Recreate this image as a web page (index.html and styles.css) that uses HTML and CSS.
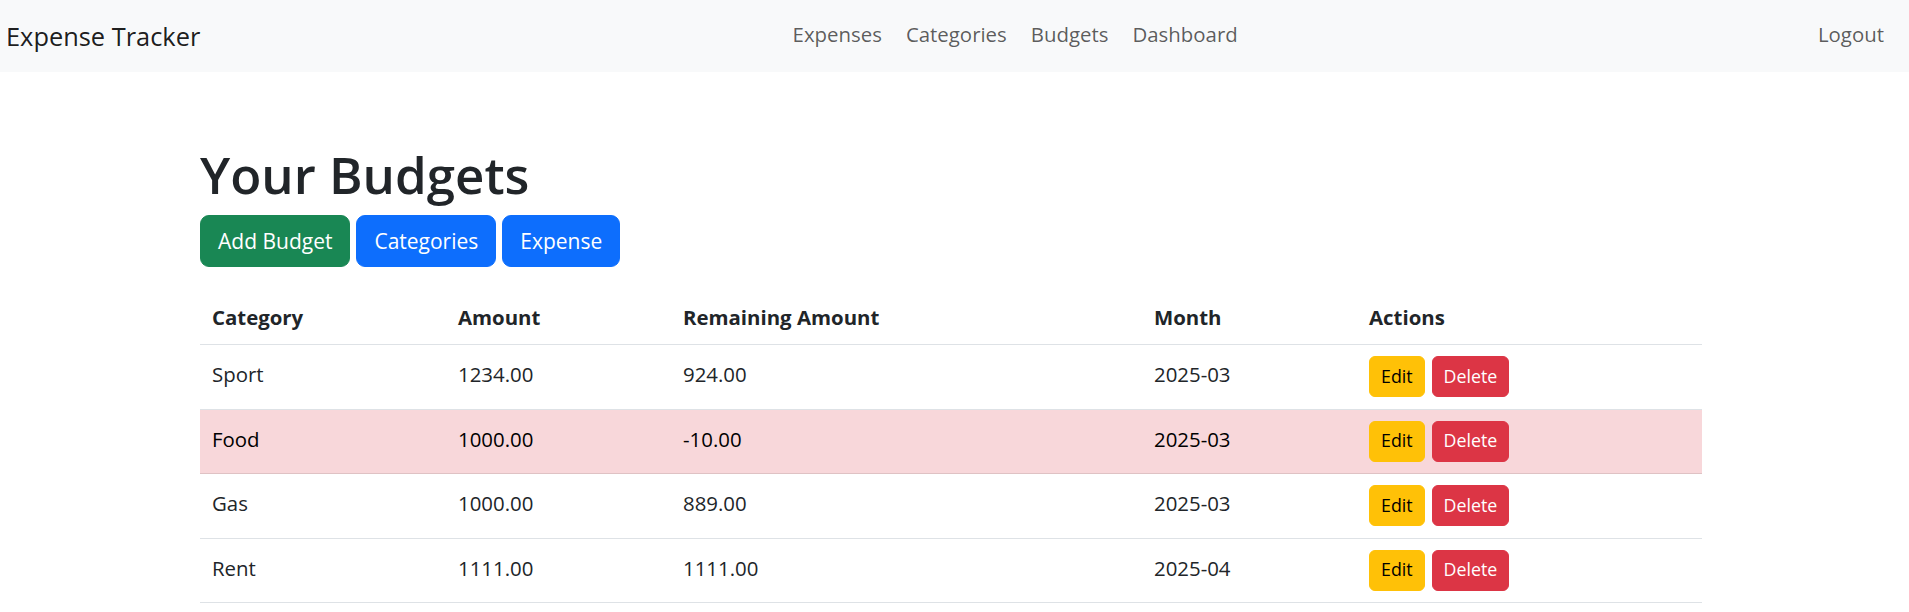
FILE: index.html
```html
<!DOCTYPE html>
<html lang="en">
<head>
<meta charset="utf-8">
<title>Expense Tracker - Budgets</title>
<link rel="stylesheet" href="styles.css">
</head>
<body>
<nav class="navbar">
  <a class="brand" href="#">Expense Tracker</a>
  <ul class="nav-main">
    <li><a class="nav-link" href="#">Expenses</a></li>
    <li><a class="nav-link" href="#">Categories</a></li>
    <li><a class="nav-link" href="#">Budgets</a></li>
    <li><a class="nav-link" href="#">Dashboard</a></li>
  </ul>
  <ul class="nav-right">
    <li><a class="nav-link" href="#">Logout</a></li>
  </ul>
</nav>
<main class="container">
  <h1 class="title">Your Budgets</h1>
  <div class="toolbar">
    <a class="btn btn-success" href="#">Add Budget</a>
    <a class="btn btn-primary" href="#">Categories</a>
    <a class="btn btn-primary" href="#">Expense</a>
  </div>
  <table class="budgets">
    <colgroup>
      <col class="c-cat"><col class="c-amt"><col class="c-rem"><col class="c-month"><col class="c-act">
    </colgroup>
    <thead>
      <tr><th>Category</th><th>Amount</th><th>Remaining Amount</th><th>Month</th><th>Actions</th></tr>
    </thead>
    <tbody>
      <tr>
        <td>Sport</td><td>1234.00</td><td>924.00</td><td>2025-03</td>
        <td><div class="actions"><a class="btn-sm btn-warning" href="#">Edit</a><a class="btn-sm btn-danger" href="#">Delete</a></div></td>
      </tr>
      <tr class="danger">
        <td>Food</td><td>1000.00</td><td>-10.00</td><td>2025-03</td>
        <td><div class="actions"><a class="btn-sm btn-warning" href="#">Edit</a><a class="btn-sm btn-danger" href="#">Delete</a></div></td>
      </tr>
      <tr>
        <td>Gas</td><td>1000.00</td><td>889.00</td><td>2025-03</td>
        <td><div class="actions"><a class="btn-sm btn-warning" href="#">Edit</a><a class="btn-sm btn-danger" href="#">Delete</a></div></td>
      </tr>
      <tr>
        <td>Rent</td><td>1111.00</td><td>1111.00</td><td>2025-04</td>
        <td><div class="actions"><a class="btn-sm btn-warning" href="#">Edit</a><a class="btn-sm btn-danger" href="#">Delete</a></div></td>
      </tr>
    </tbody>
  </table>
</main>
</body>
</html>
```
FILE: styles.css
```css
body {
  margin: 0;
  font-family: "Open Sans", "Noto Sans", sans-serif;
  font-size: 20.4px;
  color: #212529;
  background: #fff;
}

.navbar {
  display: flex;
  align-items: center;
  height: 72px;
  padding: 0 13px 0 6px;
  background: #f8f9fa;
}

.brand {
  font-size: 25.4px;
  line-height: 1.5;
  color: rgba(0, 0, 0, 0.9);
  text-decoration: none;
  margin-right: 24px;
}

.nav-main {
  display: flex;
  list-style: none;
  margin: 0 auto;
  padding: 0;
}

.nav-right {
  display: flex;
  list-style: none;
  margin: 0;
  padding: 0;
}

.nav-link {
  display: block;
  padding: 0 12px 3px;
  font-size: 20.4px;
  line-height: 1.5;
  color: rgba(0, 0, 0, 0.65);
  text-decoration: none;
}

.container {
  width: 1502px;
  margin: 72px 0 0 200px;
}

.title {
  margin: 0 0 11px;
  font-size: 51px;
  font-weight: 600;
  line-height: 60px;
  color: #212529;
}

.toolbar {
  display: flex;
  gap: 6px;
}

.btn {
  display: inline-flex;
  align-items: center;
  box-sizing: border-box;
  height: 52px;
  padding: 0 17px;
  border: 1px solid transparent;
  border-radius: 9px;
  font-size: 21px;
  color: #fff;
  text-decoration: none;
}

.btn-success {
  background: #198754;
  border-color: #198754;
}

.btn-primary {
  background: #0d6efd;
  border-color: #0d6efd;
}

.budgets {
  width: 1502px;
  margin-top: 17px;
  border-collapse: collapse;
  table-layout: fixed;
}

.c-cat { width: 246px; }
.c-amt { width: 225px; }
.c-rem { width: 471px; }
.c-month { width: 215px; }
.c-act { width: 345px; }

.budgets th,
.budgets td {
  text-align: left;
  vertical-align: top;
  padding: 0 12px;
  line-height: 36px;
  border-bottom: 1px solid #dee2e6;
}

.budgets thead th {
  padding-top: 15px;
  padding-bottom: 9px;
  font-weight: 700;
  color: #212529;
}

.budgets tbody td {
  padding-top: 11.25px;
  padding-bottom: 11.25px;
}

.budgets tr.danger td {
  background: #f8d7da;
  color: #000;
  border-bottom-color: #dfc2c4;
}

.actions {
  display: flex;
  gap: 7px;
}

.btn-sm {
  display: inline-flex;
  align-items: center;
  box-sizing: border-box;
  height: 41px;
  padding: 0 11px;
  border: 1px solid transparent;
  border-radius: 6px;
  font-size: 17.8px;
  line-height: 1;
  text-decoration: none;
}

.btn-warning {
  background: #ffc107;
  border-color: #ffc107;
  color: #000;
}

.btn-danger {
  background: #dc3545;
  border-color: #dc3545;
  color: #fff;
}
```
